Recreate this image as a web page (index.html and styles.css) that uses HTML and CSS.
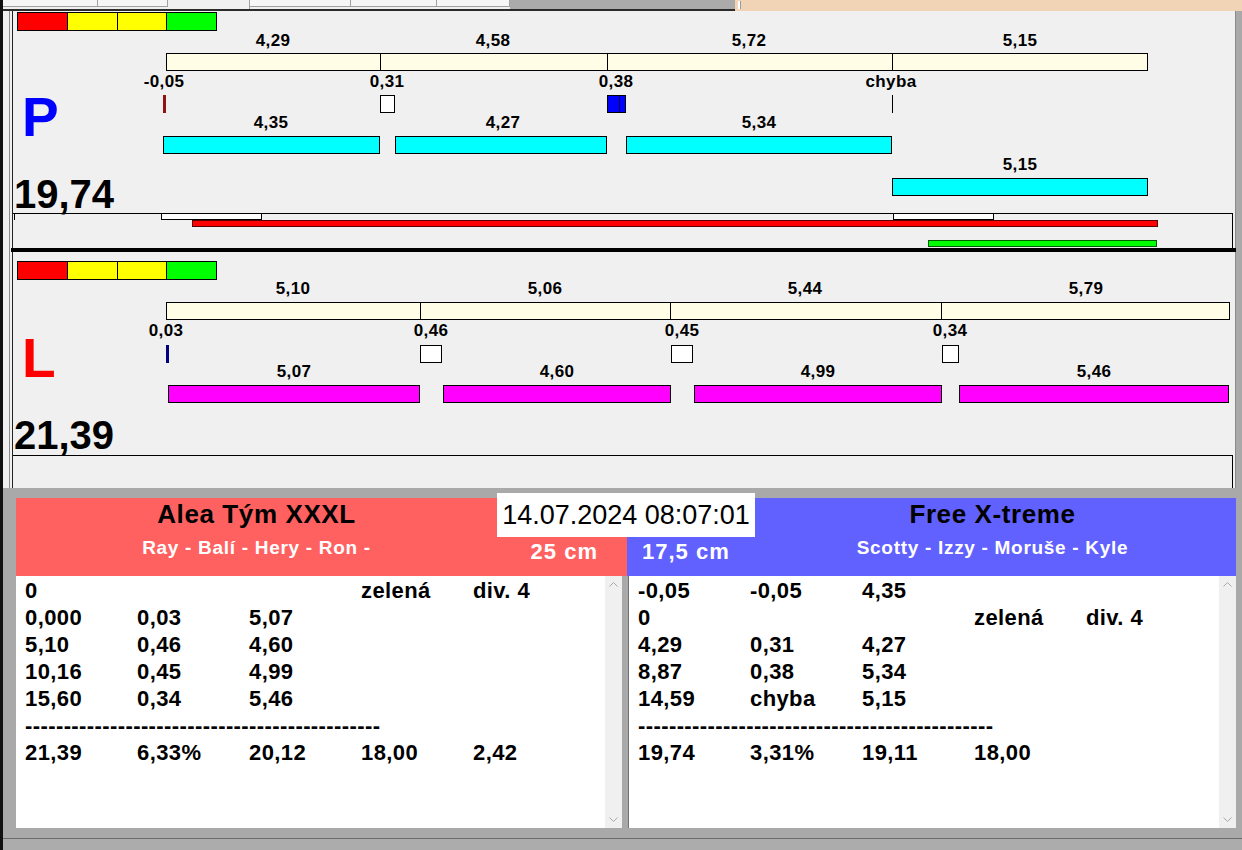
FILE: index.html
```html
<!DOCTYPE html>
<html lang="cs">
<head>
<meta charset="utf-8">
<title>Závod</title>
<link rel="stylesheet" href="styles.css">
</head>
<body>
<div class="app">
  <div class="topstrip">
    <div class="edge-top"></div>
    <div class="tabs">
      <div class="tab" style="width:95px"></div>
      <div class="tab" style="width:70px"></div>
      <div class="tab active" style="width:82px"></div>
      <div class="tab" style="width:101px"></div>
      <div class="tab" style="width:86px"></div>
      <div class="tab" style="width:73px"></div>
    </div>
    <div class="tabfill"></div>
    <div class="peach"></div>
  </div>

  <div class="body">
    <div class="edge"></div>
    <div class="main">
      <div class="charts">

        <!-- P lane -->
        <div class="chart chart-p">
          <div class="scale"><span class="s-red"></span><span class="s-yel"></span><span class="s-yel"></span><span class="s-grn"></span></div>

          <div class="lbl r1" style="left:262px">4,29</div>
          <div class="lbl r1" style="left:482px">4,58</div>
          <div class="lbl r1" style="left:738px">5,72</div>
          <div class="lbl r1" style="left:1009px">5,15</div>

          <div class="lane" style="left:155px;width:982px">
            <span style="width:213px"></span><span style="width:227px"></span><span style="width:285px"></span><span style="width:255px"></span>
          </div>

          <div class="lbl r2" style="left:153px">-0,05</div>
          <div class="lbl r2" style="left:376px">0,31</div>
          <div class="lbl r2" style="left:605px">0,38</div>
          <div class="lbl r2" style="left:880px">chyba</div>

          <div class="mk mk-red" style="left:152px;width:3px"></div>
          <div class="mk mk-box" style="left:369px;width:15px"></div>
          <div class="mk mk-blue" style="left:596px;width:19px"><i class="mk-split"></i></div>
          <div class="mk mk-line" style="left:881px;width:1px"></div>

          <div class="lbl r3" style="left:260px">4,35</div>
          <div class="lbl r3" style="left:492px">4,27</div>
          <div class="lbl r3" style="left:748px">5,34</div>

          <div class="bar cyan b1" style="left:152px;width:217px"></div>
          <div class="bar cyan b1" style="left:384px;width:212px"></div>
          <div class="bar cyan b1" style="left:615px;width:266px"></div>

          <div class="lbl r4" style="left:1009px">5,15</div>
          <div class="bar cyan b2" style="left:881px;width:256px"></div>

          <div class="big-letter letter-p">P</div>
          <div class="big-num">19,74</div>

          <div class="subbox"></div>
          <div class="tick"></div>
          <div class="sb sb-white" style="left:150px;width:101px"></div>
          <div class="sb sb-white" style="left:882px;width:101px"></div>
          <div class="sb sb-red" style="left:181px;width:966px"></div>
          <div class="sb sb-green" style="left:917px;width:229px"></div>
        </div>

        <div class="chart-sep"></div>

        <!-- L lane -->
        <div class="chart chart-l">
          <div class="scale"><span class="s-red"></span><span class="s-yel"></span><span class="s-yel"></span><span class="s-grn"></span></div>

          <div class="lbl r1" style="left:282px">5,10</div>
          <div class="lbl r1" style="left:534px">5,06</div>
          <div class="lbl r1" style="left:794px">5,44</div>
          <div class="lbl r1" style="left:1075px">5,79</div>

          <div class="lane" style="left:155px;width:1064px">
            <span style="width:253px"></span><span style="width:250px"></span><span style="width:271px"></span><span style="width:288px"></span>
          </div>

          <div class="lbl r2" style="left:155px">0,03</div>
          <div class="lbl r2" style="left:420px">0,46</div>
          <div class="lbl r2" style="left:671px">0,45</div>
          <div class="lbl r2" style="left:939px">0,34</div>

          <div class="mk mk-navy" style="left:155px;width:3px"></div>
          <div class="mk mk-box" style="left:409px;width:22px"></div>
          <div class="mk mk-box" style="left:660px;width:22px"></div>
          <div class="mk mk-box" style="left:931px;width:17px"></div>

          <div class="lbl r3" style="left:283px">5,07</div>
          <div class="lbl r3" style="left:546px">4,60</div>
          <div class="lbl r3" style="left:807px">4,99</div>
          <div class="lbl r3" style="left:1083px">5,46</div>

          <div class="bar mag" style="left:157px;width:252px"></div>
          <div class="bar mag" style="left:432px;width:228px"></div>
          <div class="bar mag" style="left:683px;width:248px"></div>
          <div class="bar mag" style="left:948px;width:270px"></div>

          <div class="big-letter letter-l">L</div>
          <div class="big-num">21,39</div>

          <div class="subbox"></div>
        </div>
      </div>

      <div class="graybar"></div>

      <div class="bottom">
        <div class="date">14.07.2024 08:07:01</div>

        <div class="head head-a">
          <div class="names">
            <div class="team">Alea Tým XXXL</div>
            <div class="members">Ray - Balí - Hery - Ron -</div>
          </div>
          <div class="len">25 cm</div>
        </div>

        <div class="head head-b">
          <div class="len">17,5 cm</div>
          <div class="names">
            <div class="team">Free X-treme</div>
            <div class="members">Scotty - Izzy - Moruše - Kyle</div>
          </div>
        </div>

        <div class="list list-a">
          <div class="list-body">
            <div class="row"><span>0</span><span></span><span></span><span>zelená</span><span>div. 4</span></div>
            <div class="row"><span>0,000</span><span>0,03</span><span>5,07</span></div>
            <div class="row"><span>5,10</span><span>0,46</span><span>4,60</span></div>
            <div class="row"><span>10,16</span><span>0,45</span><span>4,99</span></div>
            <div class="row"><span>15,60</span><span>0,34</span><span>5,46</span></div>
            <div class="row dashes">----------------------------------------------</div>
            <div class="row"><span>21,39</span><span>6,33%</span><span>20,12</span><span>18,00</span><span>2,42</span></div>
          </div>
          <div class="scroll">
            <svg class="arrow" width="9" height="5" viewBox="0 0 9 5"><path d="M0.5 4.5 L4.5 0.5 L8.5 4.5" fill="none" stroke="#a8a8a8" stroke-width="1"/></svg>
            <svg class="arrow" width="9" height="5" viewBox="0 0 9 5"><path d="M0.5 0.5 L4.5 4.5 L8.5 0.5" fill="none" stroke="#a8a8a8" stroke-width="1"/></svg>
          </div>
        </div>

        <div class="list list-b">
          <div class="list-body">
            <div class="row"><span>-0,05</span><span>-0,05</span><span>4,35</span></div>
            <div class="row"><span>0</span><span></span><span></span><span>zelená</span><span>div. 4</span></div>
            <div class="row"><span>4,29</span><span>0,31</span><span>4,27</span></div>
            <div class="row"><span>8,87</span><span>0,38</span><span>5,34</span></div>
            <div class="row"><span>14,59</span><span>chyba</span><span>5,15</span></div>
            <div class="row dashes">----------------------------------------------</div>
            <div class="row"><span>19,74</span><span>3,31%</span><span>19,11</span><span>18,00</span></div>
          </div>
          <div class="scroll">
            <svg class="arrow" width="9" height="5" viewBox="0 0 9 5"><path d="M0.5 4.5 L4.5 0.5 L8.5 4.5" fill="none" stroke="#a8a8a8" stroke-width="1"/></svg>
            <svg class="arrow" width="9" height="5" viewBox="0 0 9 5"><path d="M0.5 0.5 L4.5 4.5 L8.5 0.5" fill="none" stroke="#a8a8a8" stroke-width="1"/></svg>
          </div>
        </div>
      </div>

      <div class="footer"></div>
    </div>
  </div>
</div>
</body>
</html>
```

FILE: styles.css
```css
* { box-sizing: border-box; }
html, body { margin: 0; padding: 0; }
body {
  width: 1242px;
  height: 850px;
  overflow: hidden;
  background: #f0f0f0;
  font-family: "Liberation Sans", Arial, sans-serif;
  color: #000;
}
.app {
  width: 1242px;
  height: 850px;
  display: flex;
  flex-direction: column;
  overflow: hidden;
}

/* top strip */
.topstrip { height: 11px; flex: none; display: flex; }
.edge-top { width: 3px; background: #111; }
.tabs {
  width: 507px;
  display: flex;
  align-items: flex-start;
  background: #f0f0f0;
  border-bottom: 2px solid #2b2b2b;
}
.tab {
  height: 7px;
  background: #f6f6f6;
  border-right: 1px solid #a0a0a0;
  border-bottom: 1px solid #a0a0a0;
}
.tab.active { height: 9px; border-bottom: none; background: #f0f0f0; }
.tabfill { width: 225px; background: #ababab; border-bottom: 2px solid #2b2b2b; }
.peach { flex: 1; background: #f1d3b6; position: relative; }
.peach::before {
  content: "";
  position: absolute;
  left: 3px; top: 1px;
  width: 2px; height: 8px;
  background: #fff;
  border-right: 1px solid #9a9a9a;
}

/* body */
.body { flex: 1; display: flex; min-height: 0; }
.edge { width: 3px; flex: none; background: #111; }
.main { width: 1239px; display: flex; flex-direction: column; }

.charts {
  flex: none;
  padding-left: 8px;
  border-right: 6px solid #a9a9a9;
  background: #f0f0f0 linear-gradient(#8a8a8a, #8a8a8a) 6px 0 / 1px 100% no-repeat;
}
.chart {
  position: relative;
  width: 1225px;
  background: #f0f0f0;
  box-shadow: inset 1px 0 0 #f0f0f0, inset 2px 0 0 #222, inset -1px 0 0 #8a8a8a;
}
.chart-p { height: 237px; }
.chart-l { height: 236px; }
.chart-sep { width: 1225px; height: 4px; background: #000; }

/* colour scale */
.scale {
  position: absolute;
  left: 6px;
  width: 200px;
  height: 19px;
  display: flex;
  border: 1px solid #000;
}
.chart-p .scale { top: 1px; }
.chart-l .scale { top: 9px; }
.scale span { flex: 1; border-left: 1px solid #000; }
.scale span:first-child { border-left: none; }
.s-red { background: #ff0000; }
.s-yel { background: #ffff00; }
.s-grn { background: #00ff00; }

/* labels */
.lbl {
  position: absolute;
  transform: translateX(-50%);
  font-size: 17px;
  line-height: 18px;
  font-weight: bold;
  letter-spacing: 0.4px;
  white-space: nowrap;
  color: #000;
}
.chart-p .r1 { top: 21px; }
.chart-p .r2 { top: 62px; }
.chart-p .r3 { top: 103px; }
.chart-p .r4 { top: 145px; }
.chart-l .r1 { top: 28px; }
.chart-l .r2 { top: 70px; }
.chart-l .r3 { top: 111px; }

/* lane bar */
.lane {
  position: absolute;
  height: 18px;
  display: flex;
  border: 1px solid #000;
  background: #fffde6;
}
.chart-p .lane { top: 42px; }
.chart-l .lane { top: 50px; }
.lane span { height: 100%; border-left: 1px solid #000; }
.lane span:first-child { border-left: none; }

/* markers */
.mk { position: absolute; height: 18px; }
.chart-p .mk { top: 84px; }
.chart-l .mk { top: 93px; }
.mk-box { background: #fff; border: 1px solid #000; }
.mk-blue { background: #0000ff; border: 1px solid #000; }
.mk-split {
  position: absolute;
  left: 11px; top: 0;
  width: 1px; height: 100%;
  background: #000040;
}
.mk-red { background: #8b1414; }
.mk-navy { background: #000080; }
.mk-line { background: #000; }

/* bars */
.bar { position: absolute; height: 18px; border: 1px solid #000; }
.cyan { background: #00ffff; }
.mag { background: #ff00ff; top: 133px; }
.b1 { top: 125px; }
.b2 { top: 167px; }

/* big text */
.big-letter {
  position: absolute;
  left: 11px;
  top: 79px;
  font-size: 55px;
  line-height: 54px;
  font-weight: bold;
}
.letter-p { color: #0000ff; }
.letter-l { color: #ff0000; }
.big-num {
  position: absolute;
  left: 3px;
  top: 163px;
  font-size: 40px;
  line-height: 40px;
  font-weight: bold;
  color: #000;
}

/* bottom sub box with small bars */
.subbox {
  position: absolute;
  left: 2px;
  width: 1220px;
  bottom: 0;
  border-top: 1px solid #000;
  border-right: 1px solid #000;
}
.chart-p .subbox { top: 202px; }
.chart-l .subbox { top: 203px; }
.tick {
  position: absolute;
  left: 3px; top: 202px;
  width: 1px; height: 7px;
  background: #000;
}
.sb { position: absolute; height: 7px; border: 1px solid #000; }
.sb-white { background: #fff; top: 202px; }
.sb-red { background: #ff0000; border-color: #5a0000; top: 209px; }
.sb-green { background: #00ff00; border-color: #005a00; top: 229px; }

/* gray separator */
.graybar { height: 10px; flex: none; background: #a9a9a9; }

/* bottom section */
.bottom {
  position: relative;
  height: 330px;
  flex: none;
  background: #a9a9a9;
  padding: 0 6px 0 13px;
  display: grid;
  grid-template-columns: 611px 609px;
  grid-template-rows: 78px 252px;
}
.date {
  position: absolute;
  left: 494px;
  top: -5px;
  width: 258px;
  height: 44px;
  background: #fff;
  font-size: 27px;
  line-height: 44px;
  text-align: center;
  color: #000;
  z-index: 2;
}
.head { display: grid; color: #fff; font-weight: bold; }
.head-a { background: #ff6161; grid-template-columns: 481px 1fr; }
.head-b { background: #6161ff; grid-template-columns: 128px 1fr; }
.names { text-align: center; padding-top: 1px; }
.head-b .names { padding-right: 6px; }
.team {
  font-size: 26px;
  line-height: 30px;
  letter-spacing: 0.6px;
  color: #000;
  white-space: nowrap;
}
.members {
  margin-top: 7px;
  font-size: 19px;
  line-height: 23px;
  letter-spacing: 0.7px;
  white-space: nowrap;
}
.len {
  align-self: end;
  margin-bottom: 11px;
  font-size: 22px;
  line-height: 26px;
  letter-spacing: 1px;
  white-space: nowrap;
}
.head-a .len { justify-self: end; padding-right: 29px; }
.head-b .len { padding-left: 15px; }

.list { background: #fff; display: flex; min-height: 0; }
.list-a { margin-right: 5px; }
.list-b { margin-left: 1px; border-left: 1px solid #707070; }
.list-body {
  flex: 1;
  padding: 1px 0 0 9px;
  font-size: 22px;
  font-weight: bold;
  letter-spacing: 0.4px;
}
.row {
  display: grid;
  grid-template-columns: repeat(5, 112px);
  height: 27px;
  line-height: 27px;
  white-space: nowrap;
}
.row.dashes { display: block; }
.scroll {
  width: 17px;
  flex: none;
  background: #f0f0f0;
  display: flex;
  flex-direction: column;
  justify-content: space-between;
  align-items: center;
  padding: 6px 0 6px;
}
.arrow { display: block; }

.footer {
  flex: 1;
  background: linear-gradient(#a9a9a9 0 10px, #6b6b6b 10px 11px, #acacac 11px);
}
```
